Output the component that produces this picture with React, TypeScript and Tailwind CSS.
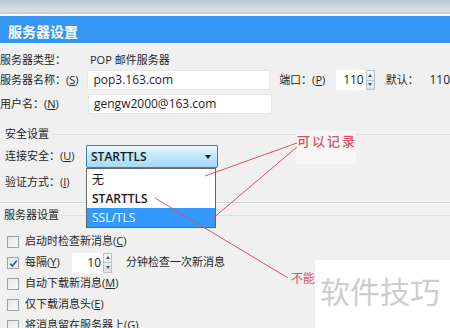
import React from "react";

const Spin = ({ w, value }: { w: string; value: string }) => (
  <div className="flex h-[20px] items-stretch">
    <div className={`${w} flex items-center justify-end bg-white pr-[2px] text-[12px] text-[#1e1e1e]`}>{value}</div>
    <div className="flex w-[9px] flex-col border border-[#b9c3cc] bg-gradient-to-b from-[#f4f6f8] to-[#dde3e8]">
      <div className="flex flex-1 items-center justify-center border-b border-[#b9c3cc]">
        <div className="h-0 w-0 border-x-[2.5px] border-b-[3px] border-x-transparent border-b-[#4a5866]" />
      </div>
      <div className="flex flex-1 items-center justify-center">
        <div className="h-0 w-0 border-x-[2.5px] border-t-[3px] border-x-transparent border-t-[#4a5866]" />
      </div>
    </div>
  </div>
);

const Check = ({ checked }: { checked?: boolean }) => (
  <div className="relative h-[12px] w-[12px] border border-[#9aa2a8] bg-gradient-to-br from-[#e2e4e6] to-[#fbfbfb]">
    {checked && (
      <svg className="absolute left-[1px] top-[1px]" width="9" height="9" viewBox="0 0 9 9">
        <path d="M1.2 4.6 L3.4 7 L7.8 1.4" fill="none" stroke="#3a56a8" strokeWidth="1.6" />
      </svg>
    )}
  </div>
);

const CheckRow = ({ checked, children }: { checked?: boolean; children: React.ReactNode }) => (
  <div className="flex h-[21px] items-center pl-[7px]">
    <Check checked={checked} />
    <div className="ml-[6px] flex items-center">{children}</div>
  </div>
);

export default function App() {
  return (
    <div className="relative h-[328px] w-[450px] overflow-hidden bg-[#f0f0f0] font-['Open_Sans','Noto_Sans_CJK_SC',sans-serif] text-[11px] text-[#262626]">
      {/* blurred window strip */}
      <div className="h-[12px] bg-gradient-to-b from-[#b9c8d6] to-[#d9e2ea]" />
      <div className="h-[2px] bg-[#c9ced3]" />
      <div className="h-[2px] bg-[#f6f7f8]" />
      {/* title bar */}
      <div className="flex h-[27px] items-center bg-[#3595f2] pl-[8px] pt-[3px] font-['Noto_Sans_CJK_SC',sans-serif] text-[14px] font-semibold text-white">
        服务器设置
      </div>

      {/* server info */}
      <div className="mt-[7px] flex h-[20px] items-center">
        <div className="w-[90px]">服务器类型：</div>
        <div>POP 邮件服务器</div>
      </div>
      <div className="flex h-[20px] items-center">
        <div className="w-[88px]">
          服务器名称：(<span className="underline">S</span>)
        </div>
        <div className="flex h-[20px] w-[184px] items-center border border-[#e4e6e8] bg-white pl-[5px] text-[12px] text-[#1e1e1e]">
          pop3.163.com
        </div>
        <div className="ml-[9px] w-[57px]">
          端口：(<span className="underline">P</span>)
        </div>
        <Spin w="w-[30px]" value="110" />
        <div className="ml-[11px] w-[44px]">默认：</div>
        <div className="text-[12px]">110</div>
      </div>
      <div className="mt-[4px] flex h-[20px] items-center">
        <div className="w-[88px]">
          用户名：(<span className="underline">N</span>)
        </div>
        <div className="flex h-[20px] w-[184px] items-center border border-[#e4e6e8] bg-white pl-[5px] text-[12px] text-[#1e1e1e]">
          gengw2000@163.com
        </div>
      </div>

      {/* security */}
      <div className="mt-[10px] flex h-[20px] items-center pl-[5px]">
        <div className="mr-[4px]">安全设置</div>
        <div className="flex-1 border-t border-[#dcdfe2]" />
      </div>
      <div className="mt-[1px] flex h-[23px] items-center pl-[5px]">
        <div className="w-[81px]">
          连接安全：(<span className="underline">U</span>)
        </div>
        <div className="flex h-[23px] w-[132px] items-center justify-between rounded-[2px] border border-[#3c7fb1] bg-gradient-to-b from-[#eaf6fd] via-[#bee6fd] to-[#a7d9f5] pl-[4px] pr-[6px]">
          <span className="text-[12px] font-semibold text-[#1a1a1a]">STARTTLS</span>
          <div className="h-0 w-0 border-x-[3.5px] border-t-[4px] border-x-transparent border-t-[#111]" />
        </div>
      </div>
      <div className="mt-[4px] flex h-[20px] items-center pl-[5px]">
        <div className="w-[81px]">
          验证方式：(<span className="underline">I</span>)
        </div>
      </div>
      <div className="mt-[10px] border-t border-b border-t-[#d6dadd] border-b-white" />

      {/* server settings */}
      <div className="mt-[1px] flex h-[20px] items-center pl-[4px]">
        <div className="mr-[4px]">服务器设置</div>
        <div className="flex-1 border-t border-[#dcdfe2]" />
      </div>
      <div className="mt-[6px]">
        <CheckRow>
          启动时检查新消息(<span className="underline">C</span>)
        </CheckRow>
        <CheckRow checked>
          <span className="w-[47px]">
            每隔(<span className="underline">Y</span>)
          </span>
          <Spin w="w-[31px]" value="10" />
          <span className="ml-[14px]">分钟检查一次新消息</span>
        </CheckRow>
        <CheckRow>
          自动下载新消息(<span className="underline">M</span>)
        </CheckRow>
        <CheckRow>
          仅下载消息头(<span className="underline">E</span>)
        </CheckRow>
        <CheckRow>
          将消息留在服务器上(<span className="underline">G</span>)
        </CheckRow>
      </div>

      {/* dropdown list (open combo) */}
      <div className="absolute left-[86px] top-[168px] w-[130px] border border-[#646464] bg-white text-[12px] text-[#1a1a1a]">
        <div className="flex h-[20px] items-center pl-[5px] font-['Noto_Sans_CJK_SC',sans-serif]">无</div>
        <div className="flex h-[19px] items-center pl-[5px] font-semibold">STARTTLS</div>
        <div className="flex h-[19px] items-center bg-[#3399ff] pl-[5px] font-medium text-white">SSL/TLS</div>
      </div>

      {/* annotations */}
      <div className="absolute left-[296px] top-[131px] h-[33px] w-[60px] bg-[#f6f6f6]" />
      <div className="absolute left-[297px] top-[131px] font-['Noto_Sans_CJK_SC',sans-serif] text-[13px] font-medium leading-[20px] tracking-[2px] text-[#e0505e]">
        可以记录
      </div>
      <svg className="absolute left-0 top-0" width="450" height="328" viewBox="0 0 450 328">
        <line x1="297" y1="143" x2="205" y2="176" stroke="#e0505e" strokeWidth="1" />
        <line x1="297" y1="147" x2="212" y2="219" stroke="#e0505e" strokeWidth="1" />
        <line x1="155" y1="198" x2="288" y2="278" stroke="#e0505e" strokeWidth="1" />
      </svg>
      <div className="absolute left-[291px] top-[269px] font-['Noto_Sans_CJK_SC',sans-serif] text-[12px] leading-[18px] text-[#e0505e]">
        不能
      </div>

      {/* watermark */}
      <div className="absolute left-[315px] top-[260px] flex h-[68px] w-[135px] items-start bg-white pl-[5px] pt-[10px] font-['Noto_Sans_CJK_SC',sans-serif] text-[30px] leading-[40px] text-[#cdcdcd]">
        软件技巧
      </div>
    </div>
  );
}
